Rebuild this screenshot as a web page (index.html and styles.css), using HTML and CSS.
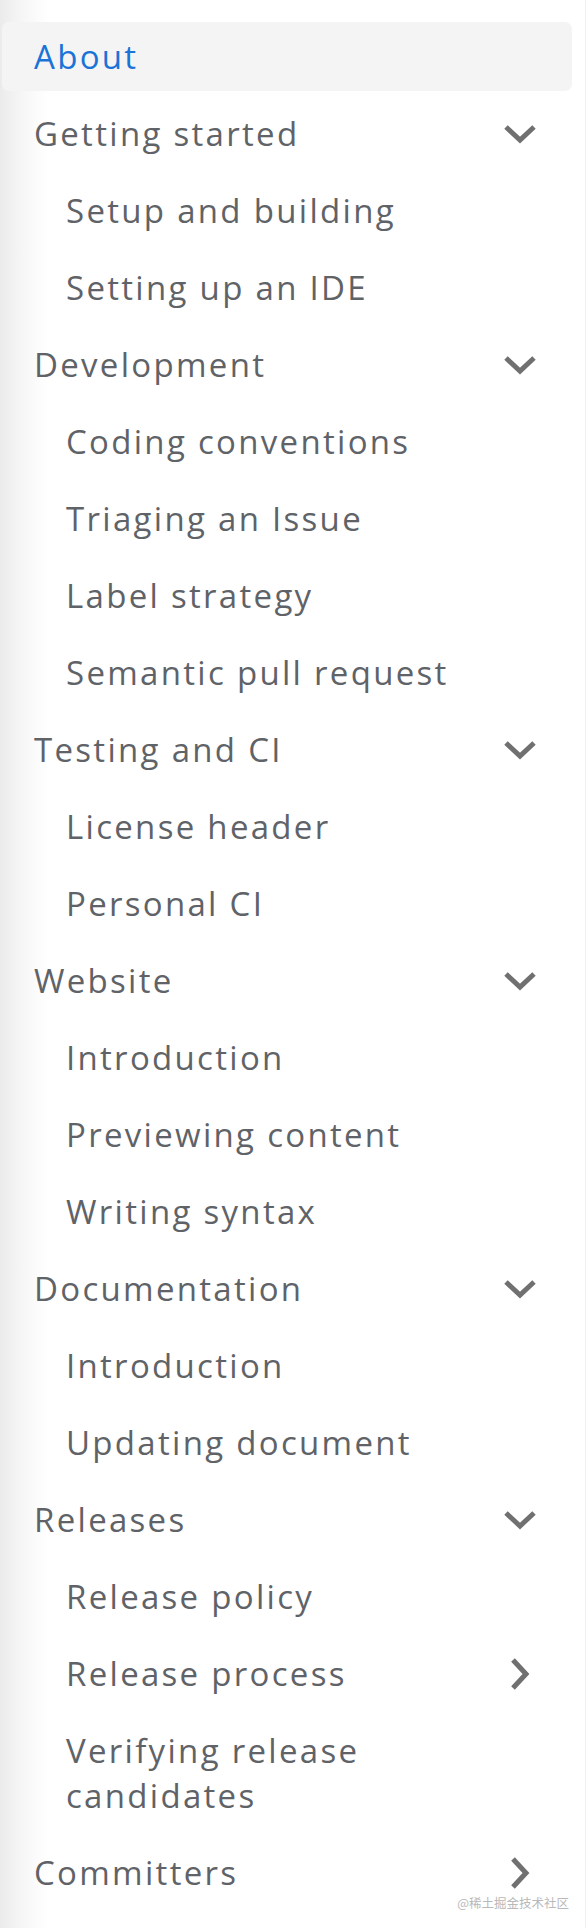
FILE: index.html
```html
<!DOCTYPE html>
<html lang="en">
<head>
<meta charset="utf-8">
<title>Docs navigation</title>
<link rel="stylesheet" href="styles.css">
</head>
<body>
<nav class="sidebar">
  <ul class="menu">
    <li class="item"><a class="link active" href="#">About</a></li>

    <li class="item">
      <a class="link" href="#"><span class="label">Getting started</span><span class="chev"><svg class="down" viewBox="0 0 34 20" width="34" height="20"><polyline points="3,3 17,16 31,3"/></svg></span></a>
      <ul class="sub">
        <li class="item"><a class="link" href="#">Setup and building</a></li>
        <li class="item"><a class="link" href="#">Setting up an IDE</a></li>
      </ul>
    </li>

    <li class="item">
      <a class="link" href="#"><span class="label">Development</span><span class="chev"><svg class="down" viewBox="0 0 34 20" width="34" height="20"><polyline points="3,3 17,16 31,3"/></svg></span></a>
      <ul class="sub">
        <li class="item"><a class="link" href="#">Coding conventions</a></li>
        <li class="item"><a class="link" href="#">Triaging an Issue</a></li>
        <li class="item"><a class="link" href="#">Label strategy</a></li>
        <li class="item"><a class="link" href="#">Semantic pull request</a></li>
      </ul>
    </li>

    <li class="item">
      <a class="link" href="#"><span class="label">Testing and CI</span><span class="chev"><svg class="down" viewBox="0 0 34 20" width="34" height="20"><polyline points="3,3 17,16 31,3"/></svg></span></a>
      <ul class="sub">
        <li class="item"><a class="link" href="#">License header</a></li>
        <li class="item"><a class="link" href="#">Personal CI</a></li>
      </ul>
    </li>

    <li class="item">
      <a class="link" href="#"><span class="label">Website</span><span class="chev"><svg class="down" viewBox="0 0 34 20" width="34" height="20"><polyline points="3,3 17,16 31,3"/></svg></span></a>
      <ul class="sub">
        <li class="item"><a class="link" href="#">Introduction</a></li>
        <li class="item"><a class="link" href="#">Previewing content</a></li>
        <li class="item"><a class="link" href="#">Writing syntax</a></li>
      </ul>
    </li>

    <li class="item">
      <a class="link" href="#"><span class="label">Documentation</span><span class="chev"><svg class="down" viewBox="0 0 34 20" width="34" height="20"><polyline points="3,3 17,16 31,3"/></svg></span></a>
      <ul class="sub">
        <li class="item"><a class="link" href="#">Introduction</a></li>
        <li class="item"><a class="link" href="#">Updating document</a></li>
      </ul>
    </li>

    <li class="item">
      <a class="link" href="#"><span class="label">Releases</span><span class="chev"><svg class="down" viewBox="0 0 34 20" width="34" height="20"><polyline points="3,3 17,16 31,3"/></svg></span></a>
      <ul class="sub">
        <li class="item"><a class="link" href="#">Release policy</a></li>
        <li class="item"><a class="link" href="#"><span class="label">Release process</span><span class="chev"><svg class="right" viewBox="0 0 20 34" width="20" height="34"><polyline points="3,3 16,17 3,31"/></svg></span></a></li>
        <li class="item"><a class="link" href="#"><span class="label">Verifying release candidates</span></a></li>
      </ul>
    </li>

    <li class="item">
      <a class="link" href="#"><span class="label">Committers</span><span class="chev"><svg class="right" viewBox="0 0 20 34" width="20" height="34"><polyline points="3,3 16,17 3,31"/></svg></span></a>
    </li>
  </ul>
  <div class="watermark">@稀土掘金技术社区</div>
</nav>
</body>
</html>
```
FILE: styles.css
```css
* { box-sizing: border-box; }

html, body {
  margin: 0;
  padding: 0;
}

body {
  width: 588px;
  min-height: 1928px;
  background: linear-gradient(90deg, #ebebeb 0, #f6f6f6 22px, #ffffff 48px);
  font-family: "Open Sans", "Liberation Sans", sans-serif;
  color: #5f6368;
}

.sidebar {
  position: relative;
  width: 586px;
  min-height: 1928px;
  border-right: 1px solid #efefef;
}

.menu, .sub {
  list-style: none;
  margin: 0;
  padding: 0;
}

.menu {
  padding-top: 18px;
}

.item {
  padding: 4px 0;
}

.sub .item:first-child { padding-top: 8px; }
.sub .item:last-child { padding-bottom: 0; }

.link {
  display: flex;
  align-items: center;
  margin: 0 13px 0 2px;
  padding: 12px 32px 12px 32px;
  font-size: 33px;
  line-height: 45px;
  letter-spacing: 2.3px;
  color: #5f6368;
  text-decoration: none;
  border-radius: 7px;
}

.sub .link {
  padding-left: 64px;
}

.link.active {
  background: #f4f4f4;
  color: #1a73d6;
}

.label {
  flex: 1 1 auto;
  min-width: 0;
}

.chev {
  flex: 0 0 40px;
  display: flex;
  justify-content: center;
  align-items: center;
}

.chev svg {
  display: block;
  fill: none;
  stroke: #707070;
  stroke-width: 5;
  stroke-linecap: butt;
  stroke-linejoin: miter;
}

.watermark {
  position: absolute;
  right: 16px;
  bottom: 18px;
  font-family: "Noto Sans CJK SC", "Noto Sans", sans-serif;
  font-size: 12.5px;
  line-height: 14px;
  color: #b9b9b9;
}
```
